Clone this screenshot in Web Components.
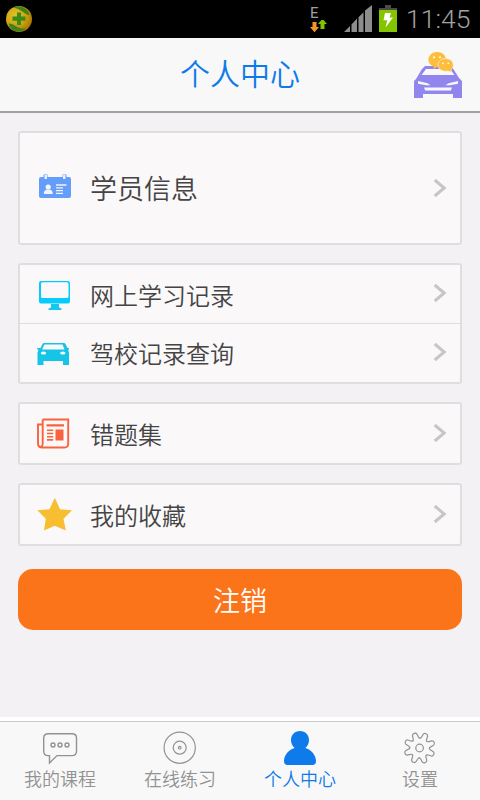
<!DOCTYPE html>
<html lang="zh-CN">
<head>
<meta charset="utf-8">
<title>个人中心</title>
<style>
html,body{margin:0;padding:0}
body{width:480px;height:800px;overflow:hidden;background:#f3f1f3;font-family:Roboto,"Noto Sans CJK SC",sans-serif}
</style>
</head>
<body>
<profile-app></profile-app>
<script>
const define = (name, html) => {
  const t = document.createElement('template');
  t.innerHTML = html;
  customElements.define(name, class extends HTMLElement {
    constructor() {
      super();
      this.attachShadow({mode: 'open'}).appendChild(t.content.cloneNode(true));
    }
  });
};

define('status-bar', `
<style>
:host{display:flex;height:38px;background:#000;align-items:flex-start;justify-content:space-between}
svg{display:block;flex:none}
.right{display:flex}
.time{font:300 26.5px/38px Roboto,sans-serif;color:#a2a2a2;width:82px;padding-left:8px;box-sizing:border-box;white-space:nowrap}
.net{display:grid;grid-template-rows:20px 18px;width:36px;font:15px/26px Roboto,sans-serif;color:#a0a0a0;padding-left:2px;box-sizing:border-box}
.net svg{margin-left:-2px}
</style>
<svg width="40" height="38" viewBox="0 0 40 38">
<defs><radialGradient id="g" cx=".35" cy=".35" r=".7"><stop offset="0" stop-color="#e0c02c"/><stop offset=".55" stop-color="#d3a510"/><stop offset="1" stop-color="#a87800"/></radialGradient></defs>
<circle cx="19" cy="19" r="13" fill="url(#g)"/>
<path d="M13 7.500C20 4 28 8 29.800 15C25 15.500 22 9 13 7.500Z" fill="#3c8419"/>
<path d="M8.500 23.500C14 23 17 29.500 26 28.500C20 34 10.500 31.500 8.500 23.500Z" fill="#3c8419"/>
<path d="M17 12.500h4v4h4.500v4.300H21V25h-4v-4.200h-4.500v-4.300H17Z" fill="#398a17"/>
</svg>
<div class="right">
<div class="net"><span>E</span><svg width="36" height="18" viewBox="308 20 36 18"><path d="M312.500 22h4v5h2.500l-4.500 5.300-4.500-5.300h2.500Z" fill="#f7942b"/><path d="M320.500 29h4v-5h2.500l-4.500-5.200-4.500 5.200h2.500Z" fill="#80c600"/></svg></div>
<svg width="54" height="38" viewBox="344 0 54 38">
<path d="M344 32L350 26V32ZM351.500 24.500L357 18.500V32H351.500ZM358.500 17.300L363.500 12.300V32H358.500ZM365 10.500L372 5V32H365Z" fill="#8d8d8d"/>
<path d="M385 5h6v3h6v2h-18V8h6Z" fill="#4a4a4a"/><path d="M379 10h18v22h-18Z" fill="#85c500"/>
<path d="M385 13h6l-1.500 4.500h3.500L385.500 27.500l1.800-7.200H383.500Z" fill="#fff"/>
</svg>
<div class="time"><span>11:45</span></div>
</div>`);

define('title-bar', `
<style>
:host{display:grid;grid-template-columns:60px 1fr 60px;height:75px;box-sizing:border-box;background:#f8f8f8;border-bottom:2px solid #a0a0a0}
h1{margin:0;text-align:center;font-weight:350;font-size:30px;line-height:73px;color:#0f7aea;grid-column:2}
svg{display:block}
</style>
<h1><slot></slot></h1>
<svg width="60" height="73" viewBox="420 38 60 73" overflow="visible">
<g transform="translate(-6 0)">
<path fill-rule="evenodd" fill="#9186ee" d="M431 66h26.500l7.500 12 3 3v17h-9v-4h-30v4h-9V81l2-2 6-10ZM432 69l-4.500 6h33l-4.500-6ZM424 81v2.800l8 1.400h4.500l-3-2ZM464 81v2.800l-8 1.400h-4.500l3-2ZM430 87.500l1.200 3h25.600l1.200-3Z"/>
</g>
<path d="M428.400 60c0-4.500 3.800-8 8.800-8s8.800 3.500 8.800 7.500-3.800 7.500-8.800 7.500l-3.800 2 .3-2.500c-3.500-1.300-5.300-3.500-5.300-6.500Z" fill="#fdbe3d"/>
<path d="M438 65c0-3.800 3.500-6.400 7.700-6.400s7.600 2.800 7.600 6.500c0 2-1 3.700-2.300 4.900v2.300l-3-1.200c-5.500 1-10-1.700-10-6.100Z" fill="#fdbe3d" stroke="#faf7ef" stroke-width=".6"/>
<g fill="#fff"><circle cx="434" cy="57.200" r="1"/><circle cx="440" cy="57.200" r="1"/><circle cx="443" cy="63.300" r=".9"/><circle cx="448.300" cy="63.300" r=".9"/></g>
</svg>`);

define('menu-card', `
<style>:host{display:block;border:2px solid #dfdddf;border-radius:3px;background:#faf8f9;--line:#dfdddf}</style><slot></slot>`);

define('menu-row', `
<style>
:host{display:flex;align-items:center;height:59px;padding:0 13px 0 16px;gap:16px;font-size:24px;font-weight:350;color:#444;box-sizing:border-box}
:host([divided]){border-bottom:1px solid var(--line)}
:host([large]){height:110px;font-size:27px}
.label{flex:1;line-height:36px;padding-top:var(--drop,5px)}
::slotted(svg){display:block;flex:none;width:38px;height:38px}
.chev{width:14px;height:20px;margin-bottom:var(--lift,2px)}
</style>
<slot name="icon"></slot><span class="label"><slot></slot></span>
<svg class="chev" viewBox="0 0 14 20"><path d="M1.700 2L11.200 10L1.700 18" fill="none" stroke="#c6c6c6" stroke-width="3"/></svg>`);

define('action-button', `
<style>
:host{display:block}
button{display:block;width:100%;height:61px;border:0;border-radius:15px;background:#fc741a;color:#fff;font:350 27px/61px "Noto Sans CJK SC",sans-serif;padding:0}
</style><button><slot></slot></button>`);

define('tab-item', `
<style>
:host{display:flex;flex-direction:column;align-items:center;color:#929292;font-size:18px;font-weight:350;line-height:26px}
:host([active]){color:#0f7aea}
::slotted(svg){display:block;width:38px;height:38px;margin-top:7px}
</style><slot name="icon"></slot><span><slot></slot></span>`);

define('tab-bar', `
<style>
:host{display:grid;grid-template-columns:repeat(4,1fr);height:83px;box-sizing:border-box;background:linear-gradient(#fff 4px,#cbcbcb 4px,#cbcbcb 5px,#f8f8f8 5px);padding-top:5px}
</style><slot></slot>`);

define('profile-app', `
<style>
:host{display:flex;flex-direction:column;height:800px}
main{flex:1;padding:18px 18px 0;display:flex;flex-direction:column;gap:18px}
action-button{margin-top:5px}
</style>
<status-bar></status-bar>
<title-bar>个人中心</title-bar>
<main>
<menu-card><menu-row large style="--lift:1px;--drop:3px">
<svg slot="icon" viewBox="36 169 38 38"><rect x="39" y="177" width="32" height="21" rx="2" fill="#659dfb"/><path d="M43.500 174.500h4v5h-4ZM62.500 174.500h4v5h-4Z" fill="#659dfb"/><path d="M44.500 175h2.500v4h-2.500ZM63 175h2.500v4H63Z" fill="#e9effb"/><circle cx="48.200" cy="187" r="2.600" fill="#f7f8fc"/><path d="M43.800 194c0-3 1.500-4.300 3-4.300h3c1.500 0 3 1.300 3 4.300ZM56 184.300h10.500v1.500H56ZM56 187.200h7v1.300h-7ZM56 190h7v1.300h-7ZM56 192.800h7v1.200h-7Z" fill="#f1f4fc"/></svg>学员信息</menu-row></menu-card>
<menu-card>
<menu-row divided>
<svg slot="icon" viewBox="36 275 38 38"><path fill-rule="evenodd" d="M41 281h27q2 0 2 2v18.500q0 2-2 2H41q-2 0-2-2V283q0-2 2-2ZM42.500 282.300q-1.500 0-1.500 1.500V296.500q0 1.500 1.500 1.500H67q1.500 0 1.500-1.500V283.800q0-1.500-1.500-1.500Z" fill="#05cdfb"/><path d="M51 304h8v3.500l2.500 1v1.400h-13v-1.400l2.500-1Z" fill="#16c8ef"/></svg>网上学习记录</menu-row>
<menu-row style="height:58px;--lift:3px;--drop:3px">
<svg slot="icon" viewBox="36 334 38 38"><path fill-rule="evenodd" d="M44 343h20q1 0 1.500 1l2 4h1.500v1.500h-1l1 3V365h-6v-4H43.500v4H37.500V352.500l1-3h-1.300V348H40.500l2-4q.5-1 1.500-1ZM44.500 344.500L42 349.500H64.500L62.500 344.500Z" fill="#14c5e8"/><ellipse cx="43.500" cy="353" rx="2.700" ry="1.600" fill="#f4f9fb"/><ellipse cx="62.800" cy="353" rx="2.700" ry="1.600" fill="#f4f9fb"/></svg>驾校记录查询</menu-row>
</menu-card>
<menu-card><menu-row>
<svg slot="icon" viewBox="36 414.500 38 38"><path d="M42.700 419H68.200V443.500Q68 447 64.500 447H41.500Q38 446.500 38 443V424h4.500M42.700 419V443.500Q42.500 446 40.500 446.500" fill="none" stroke="#fa623e" stroke-width="1.900"/><path d="M46.500 423.800H64v2.200H46.500ZM55.500 429H63.500v11h-8ZM47 429h6.200v1.600H47ZM47 432.200h6.200v1.600H47ZM47 435.400h6.200v1.600H47ZM47 438.600h6.200v1.600H47Z" fill="#fa623e"/></svg>错题集</menu-row></menu-card>
<menu-card><menu-row>
<svg slot="icon" viewBox="36 495.500 38 38"><path d="M54.800 497.300L60 508.700L72 509.800L63.500 518.200L65.800 530L54.800 525.300L44 530L45.800 518.200L37.300 509.800L49.500 508.700Z" fill="#f8be32"/></svg>我的收藏</menu-row></menu-card>
<action-button>注销</action-button>
</main>
<tab-bar>
<tab-item><svg slot="icon" viewBox="41 729 38 38" fill="none" stroke="#929292" stroke-width="1.400"><path d="M48.500 733.700H72Q76.500 733.700 76.500 738V751Q76.500 755.600 72 755.600H57L49.500 763V755.600H48Q43.700 755.600 43.700 751V738Q43.700 733.700 48.500 733.700Z"/><circle cx="53" cy="745" r="2"/><circle cx="60" cy="745" r="2"/><circle cx="67" cy="745" r="2"/></svg>我的课程</tab-item>
<tab-item><svg slot="icon" viewBox="161 729 38 38" fill="none" stroke="#929292" stroke-width="1.200"><circle cx="179.700" cy="747.700" r="15.600"/><circle cx="179.700" cy="747.700" r="6.500"/><circle cx="179.700" cy="747.700" r="1.300"/></svg>在线练习</tab-item>
<tab-item active><svg slot="icon" viewBox="281 729 38 38"><path d="M300 731C305.500 731 309 735 309 740C309 744 307 746.500 305.300 748C311 749.500 316 755 316 761Q316 765 312.500 765H287.500Q284 765 284 761C284 755 289 749.500 294.700 748C293 746.500 291 744 291 740C291 735 294.500 731 300 731Z" fill="#0f7aea"/></svg>个人中心</tab-item>
<tab-item><svg slot="icon" viewBox="401 729 38 38" fill="none" stroke="#929292" stroke-width="1.200" stroke-linecap="round">
<defs><path id="tooth" d="M-3.750-9.050Q-2.900-9.400-2.800-10.800L-2.400-14Q-2-15.600 0-15.600Q2-15.600 2.400-14L2.800-10.800Q2.900-9.400 3.750-9.050"/></defs>
<g transform="translate(419.600 748) rotate(24.500)"><use href="#tooth"/><use href="#tooth" transform="rotate(45)"/><use href="#tooth" transform="rotate(90)"/><use href="#tooth" transform="rotate(135)"/><use href="#tooth" transform="rotate(180)"/><use href="#tooth" transform="rotate(225)"/><use href="#tooth" transform="rotate(270)"/><use href="#tooth" transform="rotate(315)"/></g>
<circle cx="419.600" cy="748" r="3.800"/></svg>设置</tab-item>
</tab-bar>`);
</script>
</body>
</html>
